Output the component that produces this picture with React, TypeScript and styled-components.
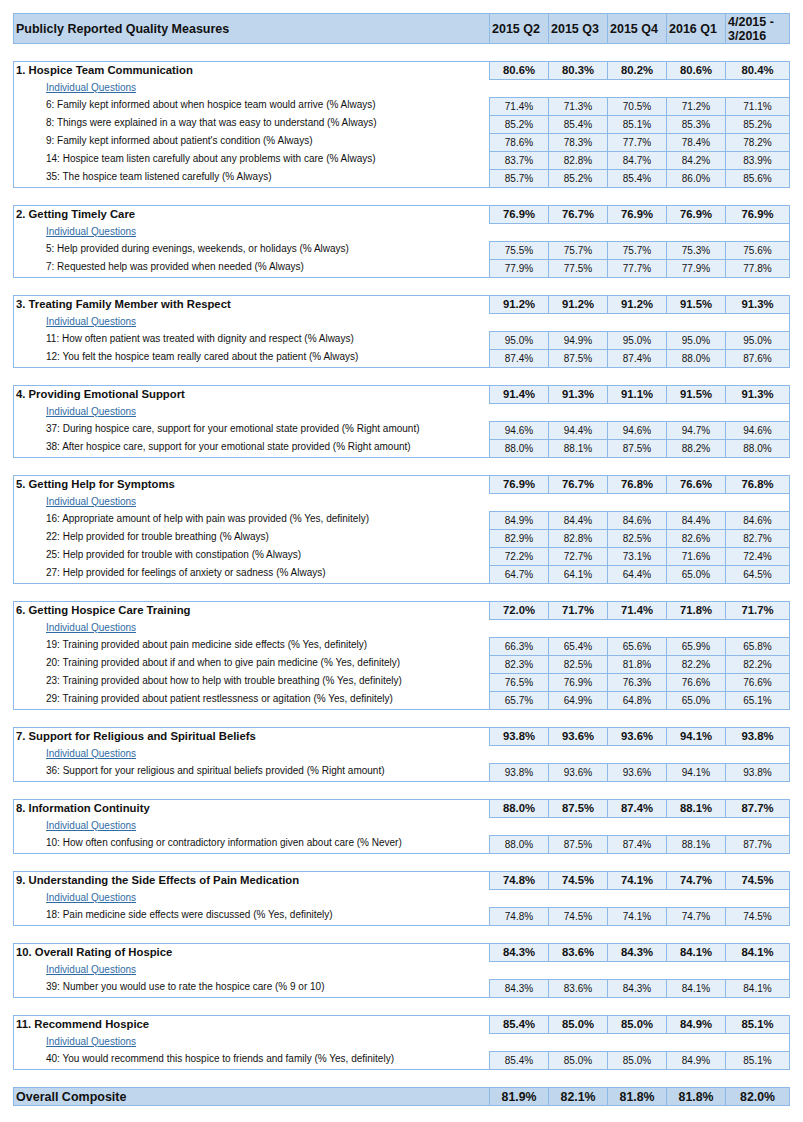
import React from "react";
import styled, { createGlobalStyle } from "styled-components";

const BORDER = "#8db9e9";
const HEAD_BG = "#c0d6ec";
const CELL_BG = "#e5effa";
const COLS = "475px 59px 59px 59px 59px 64px";

type Question = { text: string; values: string[] };
type Measure = { title: string; values: string[]; questions: Question[] };

const v = (s: string) => s.split(" ").map((x) => `${x}%`);

const MEASURES: Measure[] = [
  {
    title: "1. Hospice Team Communication",
    values: v("80.6 80.3 80.2 80.6 80.4"),
    questions: [
      { text: "6: Family kept informed about when hospice team would arrive (% Always)", values: v("71.4 71.3 70.5 71.2 71.1") },
      { text: "8: Things were explained in a way that was easy to understand (% Always)", values: v("85.2 85.4 85.1 85.3 85.2") },
      { text: "9: Family kept informed about patient's condition (% Always)", values: v("78.6 78.3 77.7 78.4 78.2") },
      { text: "14: Hospice team listen carefully about any problems with care (% Always)", values: v("83.7 82.8 84.7 84.2 83.9") },
      { text: "35: The hospice team listened carefully (% Always)", values: v("85.7 85.2 85.4 86.0 85.6") },
    ],
  },
  {
    title: "2. Getting Timely Care",
    values: v("76.9 76.7 76.9 76.9 76.9"),
    questions: [
      { text: "5: Help provided during evenings, weekends, or holidays (% Always)", values: v("75.5 75.7 75.7 75.3 75.6") },
      { text: "7: Requested help was provided when needed (% Always)", values: v("77.9 77.5 77.7 77.9 77.8") },
    ],
  },
  {
    title: "3. Treating Family Member with Respect",
    values: v("91.2 91.2 91.2 91.5 91.3"),
    questions: [
      { text: "11: How often patient was treated with dignity and respect (% Always)", values: v("95.0 94.9 95.0 95.0 95.0") },
      { text: "12: You felt the hospice team really cared about the patient (% Always)", values: v("87.4 87.5 87.4 88.0 87.6") },
    ],
  },
  {
    title: "4. Providing Emotional Support",
    values: v("91.4 91.3 91.1 91.5 91.3"),
    questions: [
      { text: "37: During hospice care, support for your emotional state provided (% Right amount)", values: v("94.6 94.4 94.6 94.7 94.6") },
      { text: "38: After hospice care, support for your emotional state provided (% Right amount)", values: v("88.0 88.1 87.5 88.2 88.0") },
    ],
  },
  {
    title: "5. Getting Help for Symptoms",
    values: v("76.9 76.7 76.8 76.6 76.8"),
    questions: [
      { text: "16: Appropriate amount of help with pain was provided (% Yes, definitely)", values: v("84.9 84.4 84.6 84.4 84.6") },
      { text: "22: Help provided for trouble breathing (% Always)", values: v("82.9 82.8 82.5 82.6 82.7") },
      { text: "25: Help provided for trouble with constipation (% Always)", values: v("72.2 72.7 73.1 71.6 72.4") },
      { text: "27: Help provided for feelings of anxiety or sadness (% Always)", values: v("64.7 64.1 64.4 65.0 64.5") },
    ],
  },
  {
    title: "6. Getting Hospice Care Training",
    values: v("72.0 71.7 71.4 71.8 71.7"),
    questions: [
      { text: "19: Training provided about pain medicine side effects (% Yes, definitely)", values: v("66.3 65.4 65.6 65.9 65.8") },
      { text: "20: Training provided about if and when to give pain medicine (% Yes, definitely)", values: v("82.3 82.5 81.8 82.2 82.2") },
      { text: "23: Training provided about how to help with trouble breathing (% Yes, definitely)", values: v("76.5 76.9 76.3 76.6 76.6") },
      { text: "29: Training provided about patient restlessness or agitation (% Yes, definitely)", values: v("65.7 64.9 64.8 65.0 65.1") },
    ],
  },
  {
    title: "7. Support for Religious and Spiritual Beliefs",
    values: v("93.8 93.6 93.6 94.1 93.8"),
    questions: [
      { text: "36: Support for your religious and spiritual beliefs provided (% Right amount)", values: v("93.8 93.6 93.6 94.1 93.8") },
    ],
  },
  {
    title: "8. Information Continuity",
    values: v("88.0 87.5 87.4 88.1 87.7"),
    questions: [
      { text: "10: How often confusing or contradictory information given about care (% Never)", values: v("88.0 87.5 87.4 88.1 87.7") },
    ],
  },
  {
    title: "9. Understanding the Side Effects of Pain Medication",
    values: v("74.8 74.5 74.1 74.7 74.5"),
    questions: [
      { text: "18: Pain medicine side effects were discussed (% Yes, definitely)", values: v("74.8 74.5 74.1 74.7 74.5") },
    ],
  },
  {
    title: "10. Overall Rating of Hospice",
    values: v("84.3 83.6 84.3 84.1 84.1"),
    questions: [
      { text: "39: Number you would use to rate the hospice care (% 9 or 10)", values: v("84.3 83.6 84.3 84.1 84.1") },
    ],
  },
  {
    title: "11. Recommend Hospice",
    values: v("85.4 85.0 85.0 84.9 85.1"),
    questions: [
      { text: "40: You would recommend this hospice to friends and family (% Yes, definitely)", values: v("85.4 85.0 85.0 84.9 85.1") },
    ],
  },
];

const HEADERS = ["2015 Q2", "2015 Q3", "2015 Q4", "2016 Q1", "4/2015 - 3/2016"];
const OVERALL = v("81.9 82.1 81.8 81.8 82.0");

const Global = createGlobalStyle`
  html, body { margin: 0; padding: 0; background: #ffffff; }
  body { font-family: "Liberation Sans", Arial, Helvetica, sans-serif; color: #111111; }
  * { box-sizing: border-box; }
`;

const Page = styled.div`
  width: 790px;
  padding: 13px 0 0 13px;
  display: flex;
  flex-direction: column;
  gap: 17px;
`;

const Band = styled.div<{ $h: number }>`
  display: grid;
  grid-template-columns: ${COLS};
  border: 1px solid ${BORDER};
  background: ${HEAD_BG};
  height: ${(p) => p.$h + 2}px;
  width: 777px;
`;

const BandLabel = styled.div`
  display: flex;
  align-items: center;
  padding-left: 2px;
  font-size: 12.5px;
  font-weight: bold;
`;

const BandCell = styled.div<{ $center?: boolean }>`
  display: flex;
  align-items: center;
  justify-content: ${(p) => (p.$center ? "center" : "flex-start")};
  border-left: 1px solid ${BORDER};
  padding-left: ${(p) => (p.$center ? "0" : "2px")};
  font-size: ${(p) => (p.$center ? "12.3px" : "12.5px")};
  font-weight: bold;
  line-height: 14px;
`;

const Section = styled.section`
  border: 1px solid ${BORDER};
  width: 777px;
  display: flex;
  flex-direction: column;
`;

const Row = styled.div<{ $h: number }>`
  display: grid;
  grid-template-columns: ${COLS};
  height: ${(p) => p.$h}px;
`;

const TitleLabel = styled.div`
  padding-left: 2px;
  font-size: 11.3px;
  font-weight: bold;
  line-height: 17px;
`;

const QLabel = styled.div<{ $top?: boolean }>`
  padding-left: 32px;
  padding-top: ${(p) => (p.$top ? 1 : 0)}px;
  font-size: 10px;
  line-height: 14px;
`;

const Cell = styled.div<{ $top?: boolean; $bottom?: boolean; $bold?: boolean }>`
  background: ${CELL_BG};
  border-left: 1px solid ${BORDER};
  border-top: ${(p) => (p.$top ? `1px solid ${BORDER}` : "none")};
  border-bottom: ${(p) => (p.$bottom ? `1px solid ${BORDER}` : "none")};
  text-align: center;
  font-size: ${(p) => (p.$bold ? "11.3px" : "10px")};
  font-weight: ${(p) => (p.$bold ? "bold" : "normal")};
  line-height: 17px;
`;

const LinkLabel = styled.div`
  padding-left: 32px;
  font-size: 10px;
  line-height: 14px;
  padding-top: 1px;
`;

const QLink = styled.a`
  color: #2f6ca6;
  text-decoration: underline;
`;

function MeasureSection({ m }: { m: Measure }) {
  const n = m.questions.length;
  return (
    <Section>
      <Row $h={18}>
        <TitleLabel>{m.title}</TitleLabel>
        {m.values.map((val, i) => (
          <Cell key={i} $bold $bottom>
            {val}
          </Cell>
        ))}
      </Row>
      <Row $h={17}>
        <LinkLabel>
          <QLink href="#">Individual Questions</QLink>
        </LinkLabel>
      </Row>
      {m.questions.map((q, qi) => {
        const first = qi === 0;
        const last = qi === n - 1;
        const h = 17 + (first ? 1 : 0) + (last ? 0 : 1);
        return (
          <Row key={qi} $h={h}>
            <QLabel $top={first}>{q.text}</QLabel>
            {q.values.map((val, i) => (
              <Cell key={i} $top={first} $bottom={!last}>
                {val}
              </Cell>
            ))}
          </Row>
        );
      })}
    </Section>
  );
}

export default function App() {
  return (
    <>
      <Global />
      <Page>
        <Band $h={29}>
          <BandLabel>Publicly Reported Quality Measures</BandLabel>
          {HEADERS.map((h) => (
            <BandCell key={h}>{h}</BandCell>
          ))}
        </Band>
        {MEASURES.map((m) => (
          <MeasureSection key={m.title} m={m} />
        ))}
        <Band $h={17}>
          <BandLabel>Overall Composite</BandLabel>
          {OVERALL.map((val, i) => (
            <BandCell key={i} $center>
              {val}
            </BandCell>
          ))}
        </Band>
      </Page>
    </>
  );
}
